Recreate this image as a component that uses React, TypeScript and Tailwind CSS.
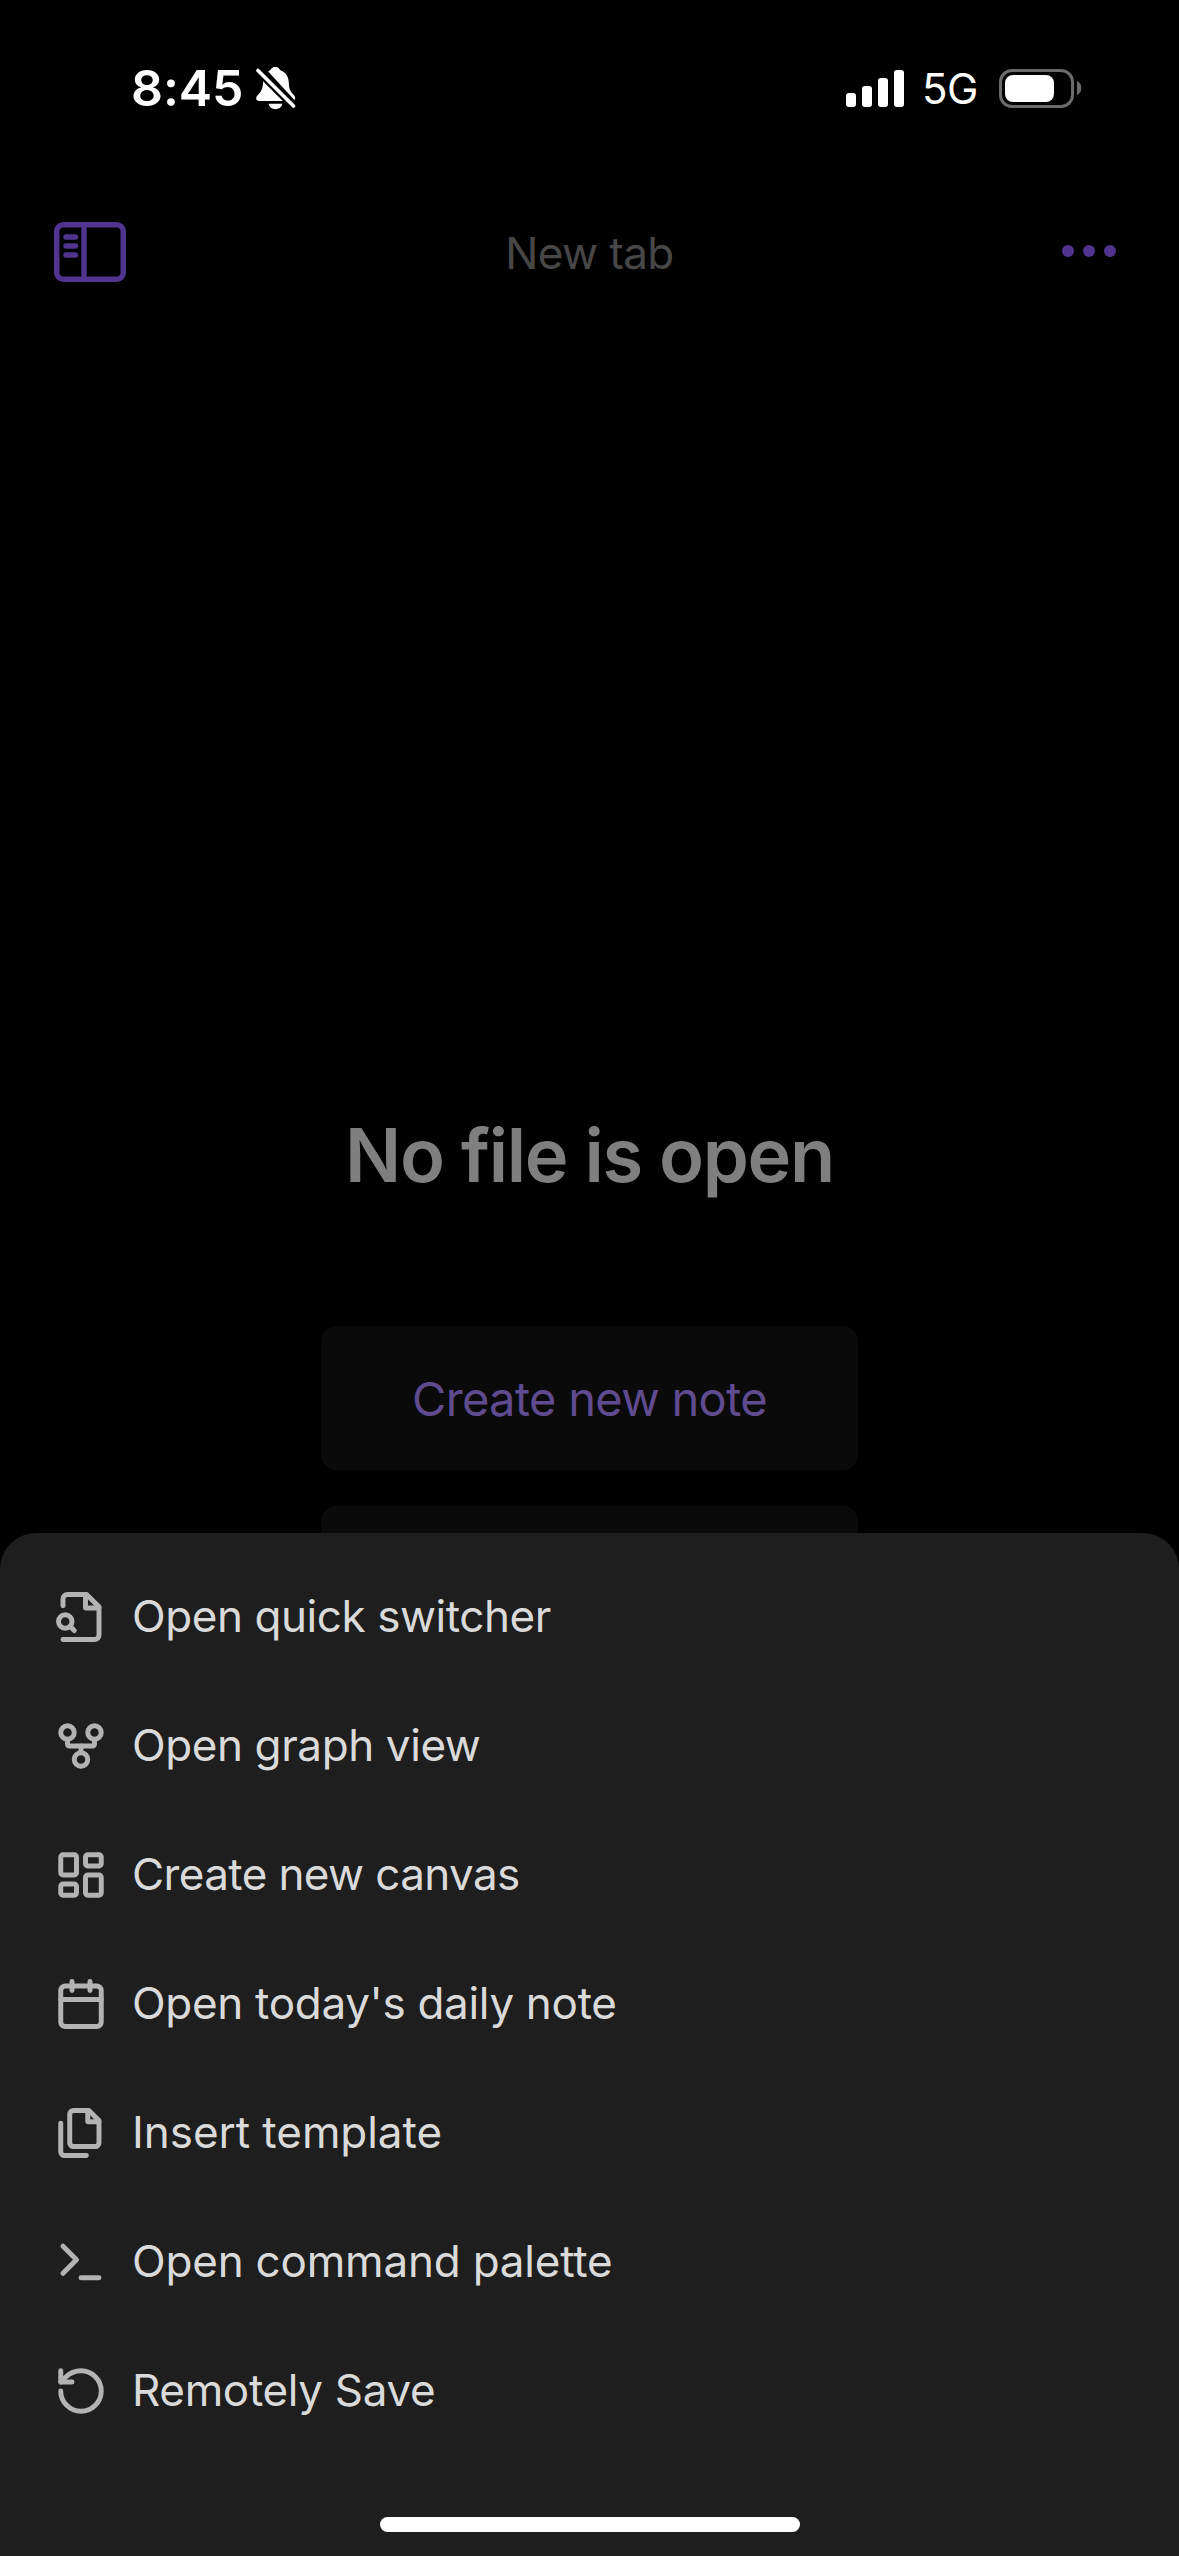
import type { ReactNode } from 'react';
import { Calendar, GitFork, LayoutDashboard } from 'lucide-react';

const iconClass = 'w-[54px] h-[54px] shrink-0 text-[#b3b3b3]';
const iconStroke = 2.2;

function Icon({ children }: { children: ReactNode }) {
    return (
        <svg
            className={iconClass}
            viewBox="0 0 24 24"
            fill="none"
            stroke="currentColor"
            strokeWidth={iconStroke}
            strokeLinecap="round"
            strokeLinejoin="round"
        >
            {children}
        </svg>
    );
}

const menuItems = [
    {
        label: 'Open quick switcher',
        spacing: 'tracking-[-0.43px]',
        icon: (
            <Icon>
                <path d="M4 22h14a2 2 0 0 0 2-2V7.5L14.5 2H6a2 2 0 0 0-2 2v3" />
                <path d="M14 2v6h6" />
                <circle cx="5" cy="14" r="3" />
                <path d="m9 18-1.5-1.5" />
            </Icon>
        ),
    },
    {
        label: 'Open graph view',
        spacing: 'tracking-[-0.4px]',
        icon: <GitFork className={iconClass} strokeWidth={iconStroke} />,
    },
    {
        label: 'Create new canvas',
        spacing: 'tracking-[-0.61px]',
        icon: <LayoutDashboard className={iconClass} strokeWidth={iconStroke} />,
    },
    {
        label: "Open today's daily note",
        spacing: 'tracking-[-0.31px]',
        icon: <Calendar className={iconClass} strokeWidth={iconStroke} />,
    },
    {
        label: 'Insert template',
        spacing: 'tracking-[-0.05px]',
        icon: (
            <Icon>
                <path d="M15.5 2H8.6c-.4 0-.8.2-1.1.5-.3.3-.5.7-.5 1.1v12.8c0 .4.2.8.5 1.1.3.3.7.5 1.1.5h9.8c.4 0 .8-.2 1.1-.5.3-.3.5-.7.5-1.1V6.5L15.5 2z" />
                <path d="M3 7.6v12.8c0 .4.2.8.5 1.1.3.3.7.5 1.1.5h9.8" />
                <path d="M15 2v5h5" />
            </Icon>
        ),
    },
    {
        label: 'Open command palette',
        spacing: 'tracking-[-0.2px]',
        icon: (
            <Icon>
                <path d="m4 17 6-6-6-6" />
                <path d="M12 19h8" />
            </Icon>
        ),
    },
    {
        label: 'Remotely Save',
        spacing: 'tracking-[-0.34px]',
        icon: (
            <Icon>
                <path d="M3 12a9 9 0 1 0 9-9 9.75 9.75 0 0 0-6.74 2.74L3 8" />
                <path d="M3 3v5h5" />
            </Icon>
        ),
    },
];

function StatusBar() {
    return (
        <div className="flex h-[176px] shrink-0 items-start pl-[131px] pr-[97px] pt-[58px] text-white">
            <span className="h-[60px] w-[125px] whitespace-nowrap text-[50px] font-semibold leading-[60px] tracking-[-0.1px]">8:45</span>
            {/* Silent mode bell */}
            <svg className="mt-[8px] h-[44px] w-[40px]" viewBox="0 0 40 44">
                <path
                    fill="#fff"
                    d="M12.2 5.4C13.8 4.4 14.6 4 15.2 3 16 1.6 17.4 1 19.3 1s3.3.6 4.1 2c.6 1 1.4 1.4 3 2.2 4.4 2.4 6.2 6.3 6.4 11.3.2 6.4 1.4 9 4.7 12.2 1.2 1.2 1.7 2.2 1.7 3.3 0 .8-.2 1.5-.8 2L12.2 5.4zM7.1 15.2 26.8 34.9H3.2C1.3 34.9.2 34 .2 32.3c0-1.3.6-2.3 1.9-3.6 3.3-3.3 4.8-5.9 5-13.5zM12.6 37.8h13.8c-.6 3.2-3.3 5.4-6.9 5.4s-6.3-2.2-6.9-5.4z"
                />
                <path d="M2.2 4.4 38 40.2" stroke="#000" strokeWidth="7" />
                <path d="M2 4.5 37.5 40" stroke="#fff" strokeWidth="3.6" strokeLinecap="round" />
            </svg>
            <div className="ml-auto flex h-[60px] items-center">
                <div className="flex h-[38px] items-end gap-[6px]">
                    <div className="h-[14px] w-[10px] rounded-[3px] bg-white" />
                    <div className="h-[21px] w-[10px] rounded-[3px] bg-white" />
                    <div className="h-[29px] w-[10px] rounded-[3px] bg-white" />
                    <div className="h-[37px] w-[10px] rounded-[3px] bg-white" />
                </div>
                <span className="ml-[18px] w-[77px] pt-[2px] text-[42px] leading-[50px] tracking-[-0.5px]">5G</span>
                <div className="h-[39px] w-[75px] rounded-[13px] border-[3px] border-[#6b6b6b] p-[3px]">
                    <div className="h-full w-[49px] rounded-[8px] bg-white" />
                </div>
                <svg className="ml-[3px] h-[14px] w-[5px]" viewBox="0 0 5 14">
                    <path d="M0 0c2.5 1 4.3 3.6 4.3 7S2.5 13 0 14z" fill="#6b6b6b" />
                </svg>
            </div>
        </div>
    );
}

function Header() {
    return (
        <header className="flex h-[152px] shrink-0 items-center justify-between pl-[54px] pr-[63px]">
            <svg className="h-[60px] w-[72px] text-[#51348f]" viewBox="0 0 72 60" fill="none" stroke="currentColor" strokeLinecap="round">
                <rect x="2.75" y="2.75" width="66.5" height="54.5" rx="6.5" strokeWidth="5.5" />
                <path d="M30 3v54M12 15h9.5M12 24h9.5M12 33h9.5" strokeWidth="5.5" />
            </svg>
            <h1 className="pt-[2px] text-[44px] leading-[60px] tracking-[-0.6px] text-[#474747]">New tab</h1>
            <div className="flex w-[63px] justify-end gap-[9px] pb-[2px]">
                <div className="h-[12px] w-[12px] rounded-full bg-[#51348f]" />
                <div className="h-[12px] w-[12px] rounded-full bg-[#51348f]" />
                <div className="h-[12px] w-[12px] rounded-full bg-[#51348f]" />
            </div>
        </header>
    );
}

export default function App() {
    return (
        <div className="flex h-[2556px] w-[1179px] flex-col overflow-hidden bg-black font-['Inter','Liberation_Sans',sans-serif]">
            <div className="flex h-[1533px] shrink-0 flex-col overflow-hidden">
                <StatusBar />
                <Header />
                <main className="flex flex-col items-center pt-[782px]">
                    <h2 className="h-[90px] whitespace-nowrap text-[74px] font-semibold leading-[90px] tracking-[-1.35px] text-[#7f7f7f]">No file is open</h2>
                    <div className="mt-[126px] flex w-[537px] flex-col gap-[36px]">
                        <button className="h-[144px] rounded-[15px] bg-[#0a0a0a] pt-[2px] text-[47px] tracking-[-0.7px] text-[#5f4b8f]">Create new note</button>
                        <button className="h-[144px] rounded-[15px] bg-[#0a0a0a]" aria-label="Go to file" />
                    </div>
                </main>
            </div>

            {/* Action sheet */}
            <div className="flex flex-1 flex-col rounded-t-[36px] bg-[#1e1e1e] pt-[19px]">
                {menuItems.map((item) => (
                    <button key={item.label} className="flex h-[129px] items-center gap-[24px] pl-[54px] text-left">
                        {item.icon}
                        <span className={`whitespace-nowrap pb-px text-[44px] leading-[60px] text-[#dadada] ${item.spacing}`}>{item.label}</span>
                    </button>
                ))}
                {/* Home indicator */}
                <div className="mx-auto mb-[24px] mt-auto h-[15px] w-[420px] rounded-full bg-white" />
            </div>
        </div>
    );
}
